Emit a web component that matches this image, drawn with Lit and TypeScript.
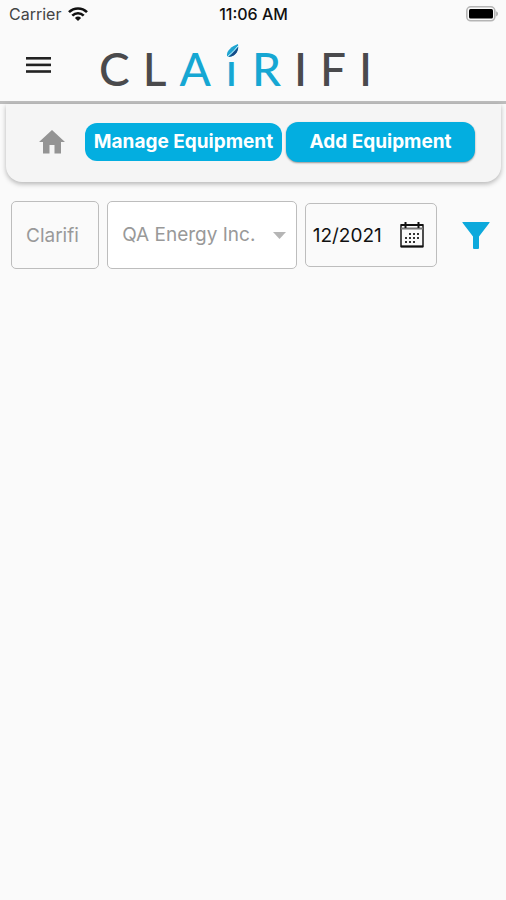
import { LitElement, html, svg, css } from "lit";
import { customElement, state } from "lit/decorators.js";

const calendarDots = [
  [11, 12], [15, 12], [19, 12],
  [7, 16], [11, 16], [15, 16], [19, 16],
  [7, 20], [11, 20], [15, 20],
];

@customElement("status-bar")
export class StatusBar extends LitElement {
  static styles = css`
    :host {
      display: grid;
      grid-template-columns: 1fr auto 1fr;
      align-items: center;
      height: 28px;
      padding: 0 8px 0 9px;
      font: 400 16px/20px Inter, "Liberation Sans", sans-serif;
      color: #444;
    }
    .carrier {
      display: flex;
      align-items: center;
      gap: 7px;
    }
    .time {
      font-weight: 500;
      color: #111;
    }
    .battery {
      justify-self: end;
    }
    svg {
      display: block;
    }
  `;

  render() {
    return html`
      <div class="carrier">
        <span>Carrier</span>
        <svg width="20" height="14" viewBox="0 0 20 14" fill="none" stroke="#111" stroke-width="2.6">
          <path d="M1 5.2C6 .2 14 .2 19 5.2" />
          <path d="M4.3 8.6C7.5 5.4 12.5 5.4 15.7 8.6" />
          <path d="M6.9 10.9Q10 8 13.1 10.9L10 14Z" fill="#111" stroke="none" />
        </svg>
      </div>
      <span class="time">11:06 AM</span>
      <svg class="battery" width="32" height="16" viewBox="0 0 32 16">
        <rect x="0.8" y="0.8" width="28" height="14" rx="4" fill="#fafafa" stroke="#b5b5b5" stroke-width="1.6" />
        <rect x="3" y="3" width="24" height="9.6" rx="1.5" fill="#000" />
        <path d="M30.2 5.2Q32 6 32 7.8T30.2 10.4Z" fill="#aaa" />
      </svg>
    `;
  }
}

@customElement("app-header")
export class AppHeader extends LitElement {
  static styles = css`
    :host {
      display: flex;
      align-items: center;
      gap: 48px;
      height: 73px;
      padding: 0 26px;
      border-bottom: 3px solid #bdbdbd;
    }
    button {
      padding: 0;
      border: 0;
      background: none;
      cursor: pointer;
    }
    svg {
      display: block;
    }
    .logo {
      display: flex;
      gap: 13px;
      padding-top: 8px;
      font: 500 46px/48px Lato, "Liberation Sans", sans-serif;
      color: #4a4a4c;
      text-decoration: none;
    }
    .blue {
      display: flex;
      gap: 15px;
      color: #16a7d3;
    }
    .stem {
      position: relative;
    }
    .leaf {
      position: absolute;
      left: 0;
      top: -1px;
    }
  `;

  render() {
    return html`
      <button aria-label="Menu">
        <svg width="25" height="18" viewBox="0 0 25 18" fill="#222">
          <rect y="1" width="25" height="2.6" />
          <rect y="7.6" width="25" height="2.6" />
          <rect y="14.2" width="25" height="2.6" />
        </svg>
      </button>
      <a class="logo" href="#" aria-label="Clairifi">
        <span>C</span><span>L</span>
        <span class="blue">
          <span>A</span>
          <span class="stem"
            >ı<svg class="leaf" width="13" height="14" viewBox="0 0 13 14">
              <path d="M1 12C0 7 6 2 12 0C13 6 10 12 3 13Z" fill="#1fa5d2" />
              <path d="M2.500 12.800C6 10 9 7 12.300 3C12 9 8 13 2.500 12.800Z" fill="#174a86" />
              <path d="M1.8 12.3Q7 8.5 12 2" fill="none" stroke="#fff" stroke-width="0.8" />
            </svg>
          </span>
          <span>R</span>
        </span>
        <span>I</span><span>F</span><span>I</span>
      </a>
    `;
  }
}

@customElement("equipment-nav")
export class EquipmentNav extends LitElement {
  static styles = css`
    :host {
      display: flex;
      align-items: center;
      box-sizing: border-box;
      height: 78px;
      margin: 0 5px 0 6px;
      padding: 0 26px 2px 33px;
      border-radius: 0 0 16px 16px;
      background: #f5f5f5;
      box-shadow: 0 2px 5px rgba(0, 0, 0, 0.28);
    }
    button {
      border: 0;
      padding: 0;
      background: none;
      cursor: pointer;
    }
    .home {
      margin-right: 20px;
    }
    svg {
      display: block;
    }
    .tab {
      flex: 197 1 0;
      height: 38px;
      border-radius: 12px;
      background: #03aee0;
      color: #fff;
      font: 700 19px/24px Inter, "Liberation Sans", sans-serif;
      white-space: nowrap;
    }
    .raised {
      flex-grow: 189;
      height: 40px;
      margin-left: 4px;
      box-shadow: 0 1px 2px rgba(0, 0, 0, 0.4);
    }
  `;

  render() {
    return html`
      <button class="home" aria-label="Home">
        <svg width="26" height="24" viewBox="0 0 26 24" fill="#949494">
          <path d="M13 0L26 12H22V23.500H15.500V15H10.500V23.500H4V12H0Z" />
        </svg>
      </button>
      <button class="tab">Manage Equipment</button>
      <button class="tab raised">Add Equipment</button>
    `;
  }
}

@customElement("filter-row")
export class FilterRow extends LitElement {
  @state() private month = "12/2021";

  static styles = css`
    :host {
      display: flex;
      align-items: center;
      gap: 25px;
      padding: 19px 16px 0 11px;
    }
    .fields {
      flex: 1;
      display: grid;
      grid-template-columns: 88fr 189fr 132fr;
      align-items: center;
      gap: 8px;
    }
    input,
    select {
      min-width: 0;
      width: 100%;
      box-sizing: border-box;
      margin: 0;
      border: 0;
      outline: 0;
      background: none;
      font: 400 19px/28px Inter, "Liberation Sans", sans-serif;
      color: #999;
      opacity: 1;
      appearance: none;
    }
    .box {
      position: relative;
      display: flex;
      align-items: center;
      box-sizing: border-box;
      min-width: 0;
      height: 68px;
      border: 1px solid #bdbdbd;
      border-radius: 5px;
    }
    .box input,
    .box select {
      height: 66px;
      padding: 0 0 0 14px;
    }
    .white {
      background: #fff;
    }
    .arrow {
      position: absolute;
      right: 10px;
      pointer-events: none;
    }
    .date {
      height: 64px;
      padding-right: 12px;
    }
    .date input {
      flex: 1;
      height: 62px;
      padding-left: 7px;
      color: #111;
    }
    button {
      padding: 0;
      border: 0;
      background: none;
      cursor: pointer;
    }
    svg {
      display: block;
    }
  `;

  render() {
    return html`
      <div class="fields">
        <div class="box"><input aria-label="Client" value="Clarifi" readonly /></div>
        <div class="box white">
          <select aria-label="Company">
            <option>QA Energy Inc.</option>
          </select>
          <svg class="arrow" width="13" height="7" viewBox="0 0 13 7" fill="#b5b5b5">
            <path d="M0 0H13L6.500 7Z" />
          </svg>
        </div>
        <div class="box date">
          <input
            aria-label="Month"
            .value=${this.month}
            @input=${(e: Event) => (this.month = (e.target as HTMLInputElement).value)}
          />
          <button aria-label="Choose month">
            <svg width="24" height="26" viewBox="0 0 24 26">
              <rect x="1" y="3" width="22" height="21.500" fill="#fafafa" stroke="#222" stroke-width="1.600" />
              <path d="M1 6.500H23" stroke="#777" stroke-width="2" />
              <path d="M1 3H23M5.500 0V6M18.500 0V6M1 24.500H23" stroke="#111" stroke-width="2" />
              ${calendarDots.map(([x, y]) => svg`<rect x=${x - 2} y=${y - 1} width="2" height="2" fill="#333" />`)}
            </svg>
          </button>
        </div>
      </div>
      <button aria-label="Filter">
        <svg width="28" height="28" viewBox="0 0 28 28" fill="#0da9dc">
          <path d="M.8 1H27.200Q28 1 27.500 1.800L17 15.500V27Q17 28 16 28H12Q11 28 11 27V15.500L.5 1.800Q0 1 .8 1Z" />
        </svg>
      </button>
    `;
  }
}

@customElement("app-root")
export class AppRoot extends LitElement {
  static styles = css`
    :host {
      display: block;
      min-height: 100vh;
      background: #fafafa;
    }
  `;

  render() {
    return html`
      <status-bar></status-bar>
      <app-header></app-header>
      <equipment-nav></equipment-nav>
      <filter-row></filter-row>
    `;
  }
}
